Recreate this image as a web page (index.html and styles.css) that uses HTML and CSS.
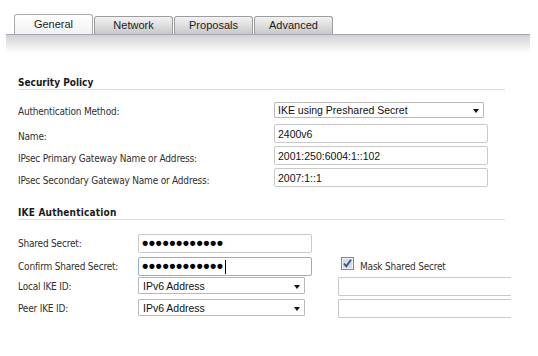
FILE: index.html
```html
<!DOCTYPE html>
<html>
	<head>
		<meta charset="UTF-8">
		<title>IPsec Policy</title>
		<link rel="stylesheet" href="styles.css">
	</head>
	<body>
		<div class="tabbar">
			<div class="tab active">General</div>
			<div class="tab">Network</div>
			<div class="tab">Proposals</div>
			<div class="tab">Advanced</div>
		</div>
		<div class="band"></div>

		<div class="section">
			<h2>Security Policy</h2>
			<div class="form policy">
				<label class="lbl first">Authentication Method:</label>
				<div class="select wide">IKE using Preshared Secret<i class="arrow"></i></div>

				<label class="lbl">Name:</label>
				<div class="field wide">2400v6</div>

				<label class="lbl">IPsec Primary Gateway Name or Address:</label>
				<div class="field wide">2001:250:6004:1::102</div>

				<label class="lbl">IPsec Secondary Gateway Name or Address:</label>
				<div class="field wide">2007:1::1</div>
			</div>
		</div>

		<div class="section">
			<h2 class="second">IKE Authentication</h2>
			<div class="form ike">
				<label class="lbl">Shared Secret:</label>
				<div class="field secret"><span class="dots">&bull;&bull;&bull;&bull;&bull;&bull;&bull;&bull;&bull;&bull;&bull;&bull;</span></div>
				<div></div>

				<label class="lbl">Confirm Shared Secret:</label>
				<div class="field secret focus"><span class="dots">&bull;&bull;&bull;&bull;&bull;&bull;&bull;&bull;&bull;&bull;&bull;&bull;</span><span class="caret"></span></div>
				<div class="check">
					<svg width="13" height="13" viewBox="0 0 13 13">
						<rect x="0.5" y="0.5" width="12" height="12" fill="#d9d9de" stroke="#85858a"/>
						<rect x="1.5" y="1.5" width="10" height="10" fill="none" stroke="#f2f2f2"/>
						<path d="M3 6.5 L5.3 9.3 L10 2.8" fill="none" stroke="#2d4f9c" stroke-width="1.8"/>
					</svg>
					<span>Mask Shared Secret</span>
				</div>

				<label class="lbl">Local IKE ID:</label>
				<div class="select short">IPv6 Address<i class="arrow"></i></div>
				<div class="field blank"></div>

				<label class="lbl">Peer IKE ID:</label>
				<div class="select short">IPv6 Address<i class="arrow"></i></div>
				<div class="field blank"></div>
			</div>
		</div>
	</body>
</html>
```

FILE: styles.css
```css
*{box-sizing: border-box;}
body{margin: 0;background: #fff;color: #303030;font-family: "DejaVu Sans Condensed", "DejaVu Sans", sans-serif;font-size: 10px;}

/* tabs */
.tabbar{display: flex;align-items: flex-end;gap: 1px;height: 35px;padding: 14px 0 0 8px;margin: 0 8px 0 6px;border-bottom: 1px solid #a4a4b6;}
.tab{width: 79px;height: 18px;border: 1px solid #9d9d9d;border-bottom: none;border-radius: 3px 3px 0 0;background: linear-gradient(#f3f3f3, #c8c8c8);font: 11px/16px "Liberation Sans", Arial, sans-serif;color: #1c1c1c;text-align: center;}
.tab.active{height: 20px;line-height: 18px;background: linear-gradient(#fff, #f1f1f1);border-color: #ababab;}
.band{height: 18px;margin: 0 8px 0 6px;background: linear-gradient(#d2d2d2, #fff);}

/* sections */
.section{width: 493px;margin-left: 18px;overflow: hidden;}
.section h2{margin: 23px 6px 0 0;height: 14px;font-size: 10px;line-height: 13px;font-weight: bold;color: #1a1a1a;border-bottom: 1px solid #cfe0e8;}
.section h2.second{margin-top: 19px;letter-spacing: 0.2px;}

.form{display: grid;align-items: start;}
.policy{grid-template-columns: 256px 214px;row-gap: 3px;margin-top: 12px;}
.ike{grid-template-columns: 120px 200px 200px;grid-template-rows: 23px 20px 22px 19px;margin-top: 14px;}

.lbl{line-height: 13px;padding-top: 6px;white-space: nowrap;letter-spacing: -0.2px;}
.lbl.first{padding-top: 3px;}
.ike .lbl{padding-top: 3px;}

/* controls */
.field, .select{display: flex;align-items: center;font: 10.5px "Liberation Sans", Arial, sans-serif;color: #111;background: #fff;white-space: nowrap;overflow: hidden;}
.field{height: 19px;padding-left: 3px;border: 1px solid #c9c9c9;border-radius: 2px;}
.select{height: 16px;padding-left: 3px;border: 1px solid #b9b9b9;border-radius: 1px;justify-content: space-between;margin-bottom: 3px;}
.select.short{height: 17px;width: 167px;padding-left: 4px;}
.field.wide{width: 214px;}
.select.wide{width: 210px;}
.field.secret{width: 174px;}
.field.focus{border-color: #86b2dc;}
.field.blank{width: 200px;border-right: none;border-radius: 2px 0 0 2px;}
.arrow{align-self: flex-end;margin: 0 4px 4px 0;border-left: 3px solid transparent;border-right: 3px solid transparent;border-top: 4px solid #111;}

.dots{font: bold 18px/17px "Liberation Sans", Arial, sans-serif;letter-spacing: 0.5px;color: #000;}
.caret{display: inline-block;width: 1px;height: 14px;background: #000;margin-left: 1px;}

.check{display: flex;align-items: flex-start;gap: 6px;padding-left: 3px;}
.check svg{display: block;}
.check span{padding-top: 3px;line-height: 13px;color: #333;letter-spacing: -0.2px;}
```
